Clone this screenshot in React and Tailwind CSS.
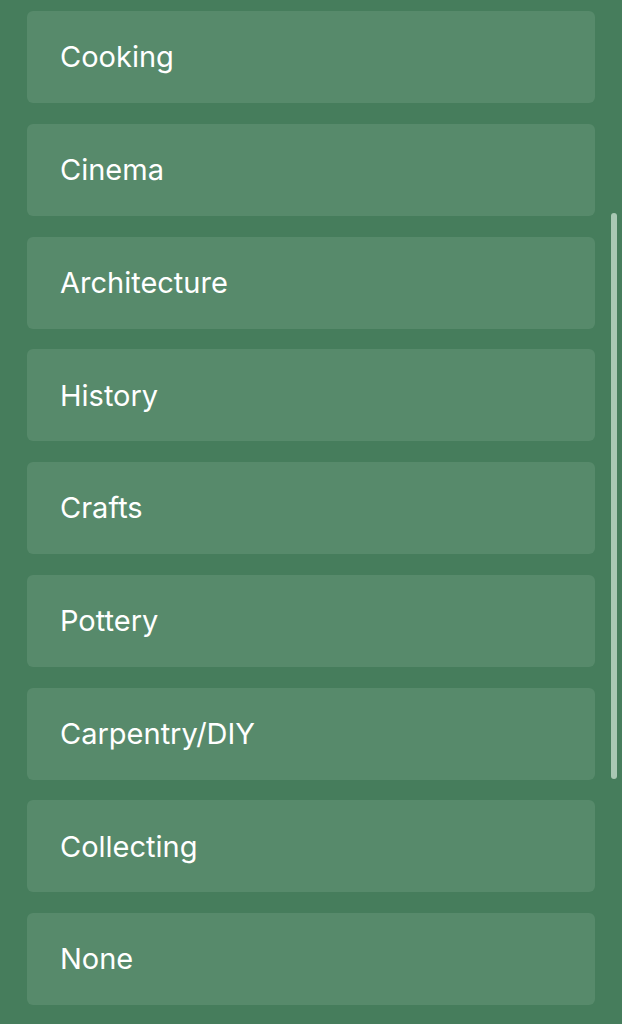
const topics = [
  "Cooking",
  "Cinema",
  "Architecture",
  "History",
  "Crafts",
  "Pottery",
  "Carpentry/DIY",
  "Collecting",
  "None",
];

export default function App() {
  return (
    <div className="relative h-[1024px] w-[622px] overflow-hidden bg-[#467d5c] font-['Inter',sans-serif]">
      <div className="flex flex-col gap-[20.75px] pl-[27px] pr-[27px] pt-[11px]">
        {topics.map((t) => (
          <div
            key={t}
            className="flex h-[92px] items-center rounded-[6px] bg-[#578a6b] pl-[33px] text-[29px] text-white"
          >
            {t}
          </div>
        ))}
      </div>
      <div className="absolute left-[611px] top-[213px] h-[566px] w-[6px] rounded-full bg-[#a9c8b4]" />
    </div>
  );
}
